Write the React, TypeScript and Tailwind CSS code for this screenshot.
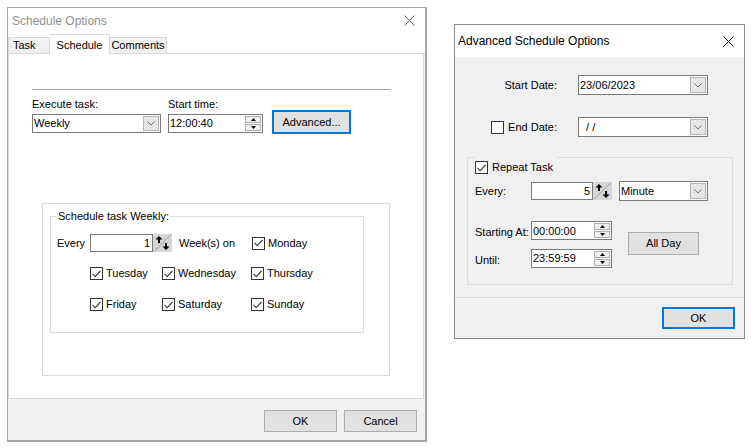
import React from 'react'

function CheckBox({ checked = false }: { checked?: boolean }) {
  return (
    <span className="w-[13px] h-[13px] shrink-0 border border-[#333333] bg-white flex items-center justify-center">
      {checked && (
        <svg width="9" height="8" viewBox="0 0 9 8">
          <path d="M0.5 3.8 L3.2 6.6 L8.5 1" stroke="#3c3c3c" strokeWidth="1.1" fill="none" />
        </svg>
      )}
    </span>
  )
}

function Chevron() {
  return (
    <svg width="8" height="5" viewBox="0 0 8 5">
      <path d="M0.5 0.5 L4 4 L7.5 0.5" stroke="#707070" fill="none" />
    </svg>
  )
}

function Combo({ value, className }: { value: string; className: string }) {
  return (
    <div className={`flex border border-[#7a7a7a] bg-white ${className}`}>
      <span className="flex-1 flex items-center pl-[1px] whitespace-pre">{value}</span>
      <span className="w-[16px] my-[1px] mr-[1px] bg-[#e6e6e6] border border-[#b4b4b4] flex items-center justify-center">
        <Chevron />
      </span>
    </div>
  )
}

// small stacked up/down buttons of a time edit
function UpDown() {
  return (
    <span className="w-[16px] my-[1px] mr-[1px] flex flex-col gap-[1px]">
      <span className="flex-1 bg-[#f0f0f0] border border-[#adadad] flex items-center justify-center">
        <svg width="5" height="3" viewBox="0 0 5 3"><path d="M2.5 0 L5 3 L0 3 Z" fill="#000" /></svg>
      </span>
      <span className="flex-1 bg-[#f0f0f0] border border-[#adadad] flex items-center justify-center">
        <svg width="5" height="3" viewBox="0 0 5 3"><path d="M0 0 L5 0 L2.5 3 Z" fill="#000" /></svg>
      </span>
    </span>
  )
}

function TimeEdit({ value, className }: { value: string; className: string }) {
  return (
    <div className={`flex border border-[#7a7a7a] bg-white ${className}`}>
      <span className="flex-1 flex items-center pl-[1px]">{value}</span>
      <UpDown />
    </div>
  )
}

// the diagonal up/down arrow glyph next to number edits
function SpinArrows() {
  return (
    <svg width="19" height="18" viewBox="0 0 19 18" className="shrink-0">
      <rect width="19" height="18" fill="#d6d6d6" />
      <line x1="1.5" y1="17" x2="18" y2="0.5" stroke="#9c9c9c" />
      <path d="M6 2 L9.5 5.5 L2.5 5.5 Z" fill="#000" />
      <rect x="5" y="5" width="2" height="4" fill="#000" />
      <path d="M13 16 L9.5 12.5 L16.5 12.5 Z" fill="#000" />
      <rect x="12" y="9" width="2" height="4" fill="#000" />
    </svg>
  )
}

function NumEdit({ value, className }: { value: string; className: string }) {
  return (
    <div className="flex items-stretch">
      <div className={`border border-[#7a7a7a] bg-white flex items-center justify-end pr-[2px] ${className}`}>{value}</div>
      <SpinArrows />
    </div>
  )
}

function CloseX({ color }: { color: string }) {
  return (
    <svg width="11" height="11" viewBox="0 0 11 11">
      <path d="M0.5 0.5 L10.5 10.5 M10.5 0.5 L0.5 10.5" stroke={color} strokeWidth="1" fill="none" />
    </svg>
  )
}

function Day({ label, className = '' }: { label: string; className?: string }) {
  return (
    <label className={`flex items-center gap-[3px] ${className}`}>
      <CheckBox checked />
      <span>{label}</span>
    </label>
  )
}

function ScheduleOptions() {
  return (
    <div className="w-[420px] h-[435px] border-l border-t border-r-2 border-b-2 border-[#a6a6a6] bg-[#f0f0f0] flex flex-col">
      <div className="h-[25px] bg-white flex items-center justify-between pl-[4px] pr-[10px] text-[12px] text-[#8f8f8f]">
        <span>Schedule Options</span>
        <CloseX color="#6b6b6b" />
      </div>
      <div className="h-[20px] bg-white flex items-end">
        <div className="h-[16px] w-[42px] border border-b-0 border-[#d9d9d9] bg-[#f0f0f0] flex items-center pl-[4px]">Task</div>
        <div className="h-[20px] w-[60px] border border-b-0 border-l-0 border-[#d9d9d9] bg-white flex items-start justify-center pt-[2px] relative top-[1px]">Schedule</div>
        <div className="h-[16px] w-[57px] border border-b-0 border-l-0 border-[#d9d9d9] bg-[#f0f0f0] flex items-center justify-center">Comments</div>
      </div>
      <div className="w-[416px] h-[346px] border border-[#d9d9d9] bg-white flex flex-col pl-[23px]">
        <div className="mt-[35px] w-[359px] h-px bg-[#a0a0a0]" />
        <div className="flex items-start mt-[8px]">
          <div className="flex flex-col">
            <span className="leading-[13px]">Execute task:</span>
            <Combo value="Weekly" className="w-[129px] h-[19px] mt-[3px]" />
          </div>
          <div className="flex flex-col ml-[7px]">
            <span className="leading-[13px]">Start time:</span>
            <TimeEdit value="12:00:40" className="w-[95px] h-[19px] mt-[3px]" />
          </div>
          <div className="ml-[9px] mt-[12px] w-[79px] h-[24px] border-2 border-[#0078d7] bg-[#e1e1e1] flex items-center justify-center">Advanced...</div>
        </div>
        <div className="mt-[69px] ml-[10px] w-[348px] h-[173px] border border-[#dcdcdc] pl-[7px] pt-[6px]">
          <fieldset className="w-[314px] h-[123px] border border-[#dcdcdc] pl-[6px]">
            <legend className="px-[1px] leading-[13px]">Schedule task Weekly:</legend>
            <div className="flex items-center h-[18px] mt-[11px]">
              <span className="w-[33px]">Every</span>
              <NumEdit value="1" className="w-[63px]" />
              <span className="w-[73px] ml-[7px]">Week(s) on</span>
              <Day label="Monday" />
            </div>
            <div className="flex items-center h-[17px] mt-[13px] pl-[33px]">
              <Day label="Tuesday" className="w-[72px]" />
              <Day label="Wednesday" className="w-[89px]" />
              <Day label="Thursday" />
            </div>
            <div className="flex items-center h-[17px] mt-[14px] pl-[33px]">
              <Day label="Friday" className="w-[72px]" />
              <Day label="Saturday" className="w-[89px]" />
              <Day label="Sunday" />
            </div>
          </fieldset>
        </div>
      </div>
      <div className="flex-1 flex justify-end items-start gap-[7px] pt-[11px] pr-[8px]">
        <div className="w-[73px] h-[22px] border border-[#adadad] bg-[#e1e1e1] flex items-center justify-center">OK</div>
        <div className="w-[73px] h-[22px] border border-[#adadad] bg-[#e1e1e1] flex items-center justify-center">Cancel</div>
      </div>
    </div>
  )
}

function AdvancedOptions() {
  return (
    <div className="mt-[17px] w-[291px] h-[315px] border border-[#8a8a8a] bg-[#f0f0f0] flex flex-col">
      <div className="h-[32px] bg-white flex items-center justify-between pl-[3px] pr-[10px] text-[12px] text-black">
        <span>Advanced Schedule Options</span>
        <CloseX color="#000" />
      </div>
      <div className="flex items-center mt-[18px] h-[20px]">
        <span className="w-[102px] text-right">Start Date:</span>
        <Combo value="23/06/2023" className="ml-[21px] w-[130px] h-[20px]" />
      </div>
      <div className="flex items-center mt-[22px] h-[20px]">
        <label className="w-[102px] flex items-center justify-end gap-[4px]">
          <CheckBox />
          <span>End Date:</span>
        </label>
        <Combo value={'\u00a0\u00a0/\u00a0/'} className="ml-[21px] w-[130px] h-[20px]" />
      </div>
      <div className="relative mt-[20px] ml-[12px] w-[266px] h-[128px] border border-[#dcdcdc] pl-[7px] pt-[23px]">
        <label className="absolute -top-[1px] left-[7px] h-[21px] pr-[4px] bg-[#f0f0f0] flex items-center gap-[4px]">
          <CheckBox checked />
          <span>Repeat Task</span>
        </label>
        <div className="flex items-center h-[20px]">
          <span className="w-[56px]">Every:</span>
          <NumEdit value="5" className="w-[62px]" />
          <Combo value="Minute" className="ml-[7px] w-[89px] h-[20px]" />
        </div>
        <div className="flex items-center mt-[20px]">
          <div className="flex flex-col gap-[8px]">
            <div className="flex items-center">
              <span className="w-[56px] mt-[3px]">Starting At:</span>
              <TimeEdit value="00:00:00" className="w-[81px] h-[19px]" />
            </div>
            <div className="flex items-center">
              <span className="w-[56px] mt-[3px]">Until:</span>
              <TimeEdit value="23:59:59" className="w-[81px] h-[19px]" />
            </div>
          </div>
          <div className="ml-[16px] -mt-[3px] w-[71px] h-[23px] border border-[#adadad] bg-[#e1e1e1] flex items-center justify-center">All Day</div>
        </div>
      </div>
      <div className="mt-[12px] border-t border-[#dcdcdc] flex justify-end pt-[9px] pr-[9px]">
        <div className="w-[73px] h-[22px] border-2 border-[#0078d7] bg-[#e1e1e1] flex items-center justify-center">OK</div>
      </div>
    </div>
  )
}

export default function App() {
  return (
    <div className="w-[751px] h-[448px] bg-white flex items-start gap-[27px] pl-[7px] pt-[7px] font-['Liberation_Sans',Arial,sans-serif] text-[11px] text-black">
      <ScheduleOptions />
      <AdvancedOptions />
    </div>
  )
}
